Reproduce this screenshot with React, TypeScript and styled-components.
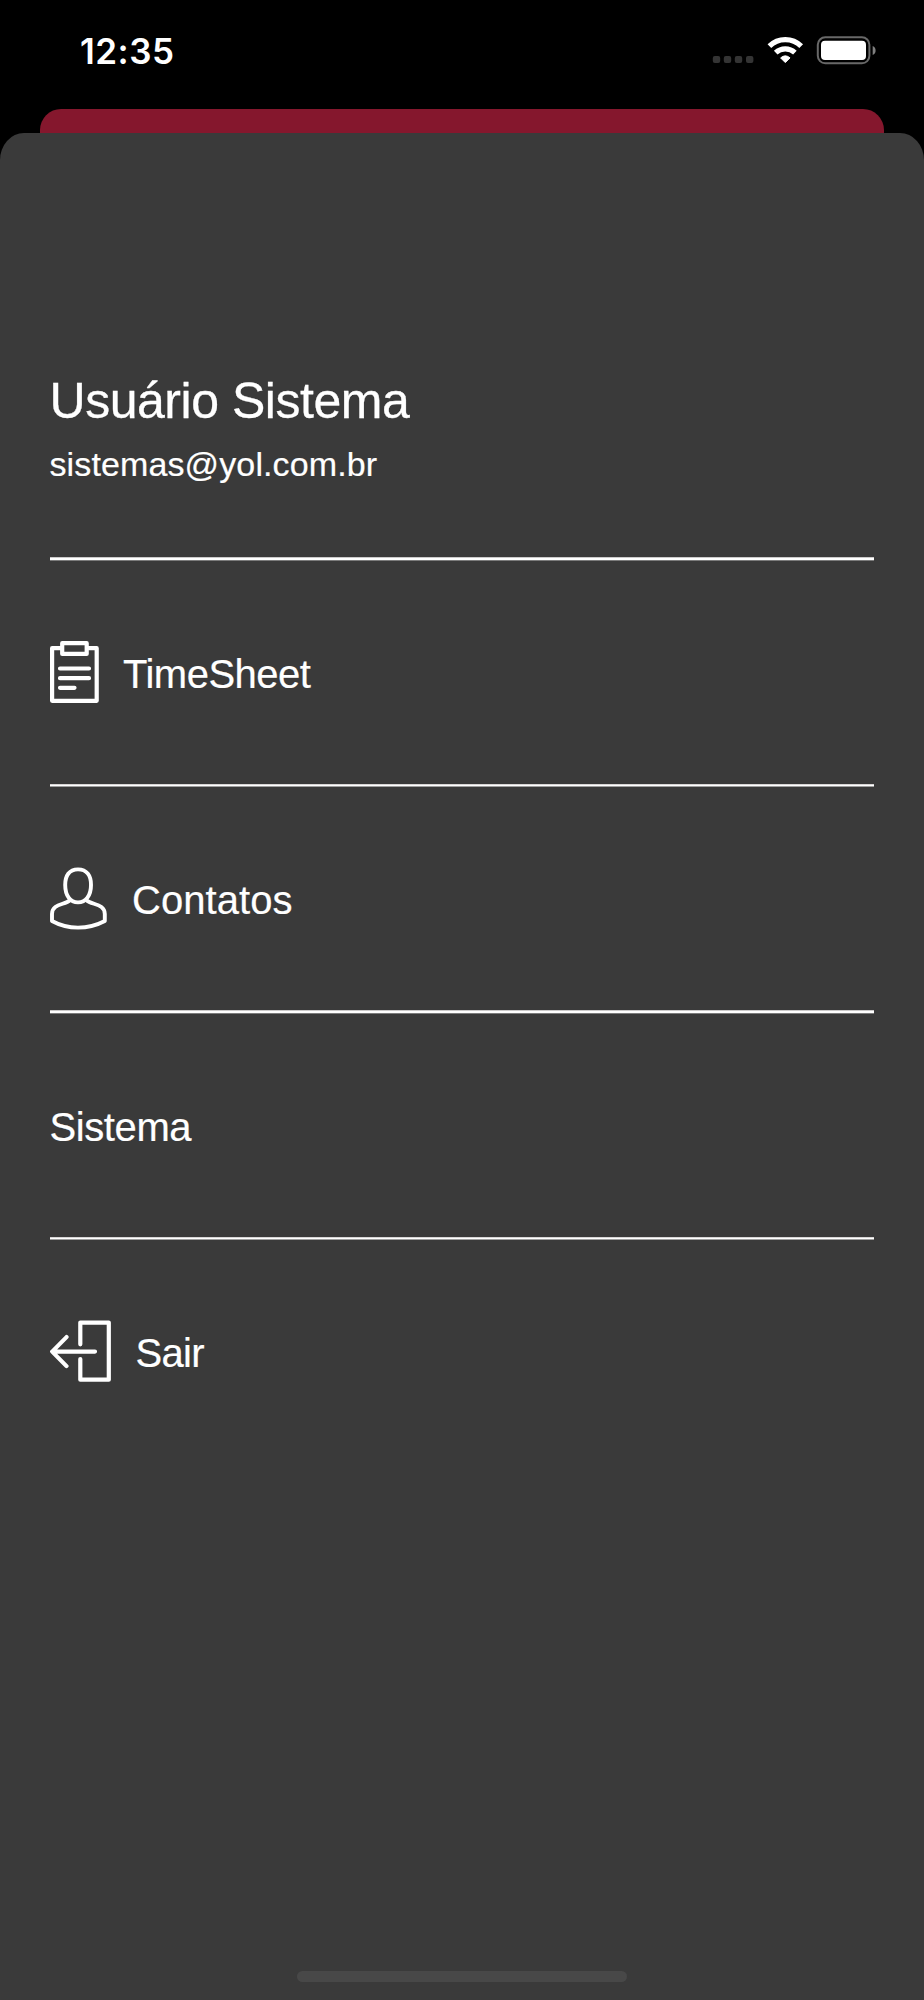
import React from "react";
import styled, { createGlobalStyle } from "styled-components";

const GlobalStyle = createGlobalStyle`
  * { box-sizing: border-box; }
  body { margin: 0; background: #000; }
`;

const Screen = styled.div`
  width: 924px;
  height: 2000px;
  display: flex;
  flex-direction: column;
  overflow: hidden;
  background: #000;
  color: #fff;
  font-family: "Liberation Sans", Arial, sans-serif;
`;

const StatusBar = styled.header`
  height: 109px;
  flex: none;
  display: flex;
  align-items: flex-start;
  justify-content: space-between;
  padding: 29px 48px 0 80px;
`;

const Clock = styled.time`
  font: 600 35px/44px Inter, sans-serif;
  letter-spacing: 0.5px;
`;

const StatusIcons = styled.div`
  display: flex;
  padding-top: 7px;
`;

const BackCard = styled.div`
  height: 24px;
  flex: none;
  margin: 0 40px;
  border-radius: 21px 21px 0 0;
  background: #85172d;
`;

const Sheet = styled.main`
  flex: 1;
  display: flex;
  flex-direction: column;
  padding: 0 50px;
  border-radius: 24px 24px 0 0 / 27px 27px 0 0;
  background: #3a3a3a;
`;

const Profile = styled.section`
  height: 424px;
  padding-top: 238px;
`;

const UserName = styled.h1`
  margin: 0 0 0 -0.5px;
  font-size: 50px;
  font-weight: 400;
  line-height: 60px;
  letter-spacing: -0.47px;
  -webkit-text-stroke: 0.3px #fff;
`;

const Email = styled.p`
  margin: 13px 0 0 -0.5px;
  font-size: 34px;
  line-height: 40px;
  letter-spacing: 0.12px;
  -webkit-text-stroke: 0.2px #fff;
`;

const Menu = styled.nav`
  display: flex;
  flex-direction: column;
`;

const Divider = styled.div<{ $thick?: boolean }>`
  height: ${(p) => (p.$thick ? 4 : 3)}px;
  background: ${(p) =>
    p.$thick
      ? "linear-gradient(#cccaca 0 1px, #fff 1px 3px, #7c7c7c 3px)"
      : "linear-gradient(#d8d6d6 0 1px, #fff 1px 2px, #a0a0a0 2px)"};
`;

const MenuItem = styled.a<{ $gap?: number }>`
  height: 223px;
  padding-top: 80px;
  display: flex;
  align-items: flex-start;
  gap: ${(p) => p.$gap ?? 25}px;
  color: inherit;
  text-decoration: none;
`;

const Label = styled.span<{ $tracking?: number; $shift?: number }>`
  margin-left: ${(p) => p.$shift ?? 0}px;
  font-size: 40px;
  line-height: 67px;
  letter-spacing: ${(p) => p.$tracking ?? -0.5}px;
  -webkit-text-stroke: 0.2px #fff;
`;

const Icon = styled.svg`
  display: block;
  flex: none;
  fill: none;
  stroke: #fff;
  stroke-linecap: round;
  stroke-linejoin: round;
`;

const HomeIndicator = styled.div`
  width: 330px;
  height: 11px;
  margin: auto auto 18px 247px;
  border-radius: 6px;
  background: #484848;
`;

const SignalIcons = () => (
  <svg width="164" height="30" viewBox="712 36 164 30" fill="#fff">
    {[712.8, 723.8, 734.8, 746].map((x) => (
      <rect key={x} x={x} y="56" width="7.4" height="7" rx="2" fill="#343434" />
    ))}
    <path
      d="M785.3 62.6 L780.6 57.9 Q785.3 53.8 790 57.9 Z"
      stroke="#fff"
      strokeWidth="1"
      strokeLinejoin="round"
    />
    <g fill="none" stroke="#fff" strokeWidth="5.2">
      <path d="M769.4 46.2 A22.6 22.6 0 0 1 801.2 46.2" />
      <path d="M775.7 52.7 A14 14 0 0 1 794.9 52.7" />
    </g>
    <rect x="817.8" y="37.3" width="51.6" height="26" rx="7.5" fill="none" stroke="#686868" strokeWidth="2" />
    <rect x="821" y="40.8" width="45" height="19.2" rx="4" />
    <path d="M872.7 46 Q875.6 47.3 875.6 50.5 Q875.6 53.7 872.7 55 Z" fill="#808080" />
  </svg>
);

const ClipboardIcon = () => (
  <Icon width="49" height="62" viewBox="0 0 49 62" strokeWidth="4.2">
    <path d="M11 7.2H2.1V59.8H46.7V7.2H38" />
    <rect x="12.2" y="2.2" width="24.5" height="10.7" />
    <path d="M10 27.5H39M10 37.2H39M10 46.8H24.5" />
  </Icon>
);

const PersonIcon = () => (
  <Icon width="57" height="63" viewBox="0 -0.4 57 63" strokeWidth="3.9">
    <path d="M28 2C19 2 15.2 8.5 15.2 17.5C15.2 28 20.2 35 28 35S41 28 41 17.5C41 8.5 37 2 28 2Z" />
    <path d="M20 32.8C14.5 37.5 2 36.5 2 46.5V53.6C10 58 18.8 60.2 28 60.2S46.5 58 54.8 53.6V46.5C54.8 36.5 42 37.5 36.5 32.8" />
  </Icon>
);

const ExitIcon = () => (
  <Icon width="61" height="62" viewBox="0 -0.3 61 62" strokeWidth="4.2">
    <path d="M30.3 24V2.3H58.8V59.4H30.3V38.8" />
    <path d="M45 31.3H2.2M16.5 16.8L2.2 31.3L16.5 45.8" />
  </Icon>
);

export default function App() {
  return (
    <>
      <GlobalStyle />
      <Screen>
        <StatusBar>
          <Clock>12:35</Clock>
          <StatusIcons>
            <SignalIcons />
          </StatusIcons>
        </StatusBar>
        <BackCard />
        <Sheet>
          <Profile>
            <UserName>Usuário Sistema</UserName>
            <Email>sistemas@yol.com.br</Email>
          </Profile>
          <Menu>
            <Divider $thick />
            <MenuItem $gap={24}>
              <ClipboardIcon />
              <Label>TimeSheet</Label>
            </MenuItem>
            <Divider />
            <MenuItem>
              <PersonIcon />
              <Label $tracking={0.05}>Contatos</Label>
            </MenuItem>
            <Divider $thick />
            <MenuItem>
              <Label $shift={-0.5} $tracking={-0.4}>Sistema</Label>
            </MenuItem>
            <Divider />
            <MenuItem $gap={24.5}>
              <ExitIcon />
              <Label $tracking={-0.7}>Sair</Label>
            </MenuItem>
          </Menu>
          <HomeIndicator />
        </Sheet>
      </Screen>
    </>
  );
}
